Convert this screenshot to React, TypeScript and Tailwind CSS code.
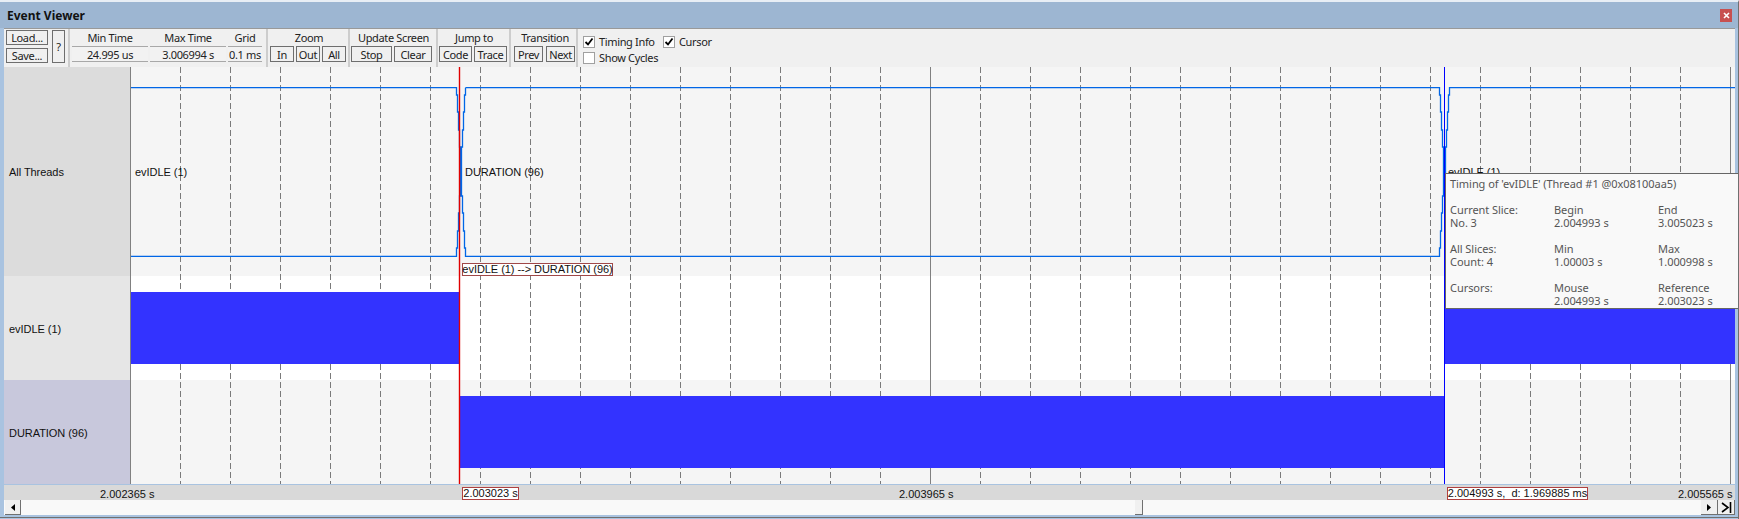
import React from "react";

const gridXs = Array.from({ length: 31 }, (_, i) => 180 + i * 50).filter((x) => x !== 930 && x !== 1730);

// y-levels where the slice trace steps one pixel inwards
const stepYs = [87.7, 95, 112, 130, 147, 196, 213, 231, 248, 256.3];
const stepDx = [0, 1, 2, 3, 4, 3, 2, 1, 0];

function edge(x: number, dir: number) {
  const pts: string[] = [];
  stepDx.forEach((dx, i) => {
    pts.push(`${x + dx * dir + 0.5},${stepYs[i]}`);
    pts.push(`${x + dx * dir + 0.5},${stepYs[i + 1]}`);
  });
  return pts;
}

function ToolButton({ label, className }: { label: string; className: string }) {
  return (
    <div className={`flex items-center justify-center border border-[#6e6e6e] bg-[#f0f0f0] text-[#222] ${className}`}>
      {label}
    </div>
  );
}

function Section({ title, className, children }: { title: string; className: string; children: React.ReactNode }) {
  return (
    <div className={`flex h-full shrink-0 flex-col border-r-2 border-r-[#cdcdcd] ${className}`}>
      <div className="flex h-[17px] items-center justify-center text-[#222]">{title}</div>
      <div className="flex h-[16px] gap-[2px]">{children}</div>
    </div>
  );
}

function ValueBox({ value, className }: { value: string; className: string }) {
  return (
    <div className={`flex items-center justify-center border-y border-y-[#a8a8a8] bg-[#f2f2f2] text-[#222] ${className}`}>
      {value}
    </div>
  );
}

function CheckBox({ label, checked, className }: { label: string; checked: boolean; className: string }) {
  return (
    <div className={`flex items-center gap-[4px] ${className}`}>
      <div className="flex h-[12px] w-[12px] items-center justify-center border border-[#a0a0a0] bg-white">
        {checked && (
          <svg width="10" height="10" viewBox="0 0 10 10">
            <path d="M1.5 5 L4 7.5 L8.5 1.5" fill="none" stroke="#000" strokeWidth="1.8" />
          </svg>
        )}
      </div>
      <span className="whitespace-nowrap text-[#222]">{label}</span>
    </div>
  );
}

function TipBlock({ rows }: { rows: string[][] }) {
  return (
    <div className="flex flex-col">
      {rows.map((row, i) => (
        <div key={i} className="grid h-[13px] grid-cols-[104px_104px_1fr] items-center whitespace-nowrap">
          {row.map((cell, j) => (
            <span key={j}>{cell}</span>
          ))}
        </div>
      ))}
    </div>
  );
}

function ScrollButton({ children, className }: { children: React.ReactNode; className: string }) {
  return (
    <div className={`flex h-[15px] items-center justify-center border-r border-b border-r-[#707070] border-b-[#707070] bg-[#f0f0f0] ${className}`}>
      {children}
    </div>
  );
}

export default function App() {
  return (
    <div className="relative flex h-[519px] w-[1739px] flex-col overflow-hidden border-t-2 border-r border-t-[#e8eef5] border-r-[#707070] bg-[#a9c3e0] text-[11px] leading-[13px] [font-family:'Noto_Sans',sans-serif]">
      {/* title bar */}
      <div className="flex h-[26px] shrink-0 items-center justify-between bg-[#9db6d2] pl-[7px] pr-[6px]">
        <span className="text-[12px] font-bold text-[#111]">Event Viewer</span>
        <div className="flex h-[13px] w-[12px] items-center justify-center bg-[#c75050]">
          <svg width="7" height="7" viewBox="0 0 7 7">
            <path d="M1 1 L6 6 M6 1 L1 6" stroke="#fff" strokeWidth="1.6" />
          </svg>
        </div>
      </div>

      <div className="ml-[4px] mr-[3px] flex min-h-0 flex-1 flex-col">
        {/* toolbar */}
        <div className="flex h-[39px] shrink-0 border-t border-t-[#999] bg-[#f0f0f0] tracking-[-0.35px]">
          <div className="flex h-full w-[66px] shrink-0 gap-[4px] border-r-2 border-r-[#cdcdcd] pl-[2px] pt-[1px]">
            <div className="flex flex-col gap-[3px]">
              <ToolButton label="Load..." className="h-[15px] w-[42px]" />
              <ToolButton label="Save..." className="h-[15px] w-[42px]" />
            </div>
            <ToolButton label="?" className="h-[33px] w-[13px]" />
          </div>
          <div className="flex h-full w-[198px] shrink-0 gap-[2px] border-r-2 border-r-[#cdcdcd] pl-[2px]">
            <div className="flex flex-col">
              <div className="flex h-[17px] items-center justify-center text-[#222]">Min Time</div>
              <ValueBox value="24.995 us" className="h-[16px] w-[76px]" />
            </div>
            <div className="flex flex-col">
              <div className="flex h-[17px] items-center justify-center text-[#222]">Max Time</div>
              <ValueBox value="3.006994 s" className="h-[16px] w-[76px]" />
            </div>
            <div className="flex flex-col">
              <div className="flex h-[17px] items-center justify-center text-[#222]">Grid</div>
              <ValueBox value="0.1 ms" className="h-[16px] w-[34px]" />
            </div>
          </div>
          <Section title="Zoom" className="w-[82px] pl-[2px]">
            <ToolButton label="In" className="w-[24px]" />
            <ToolButton label="Out" className="w-[24px]" />
            <ToolButton label="All" className="w-[24px]" />
          </Section>
          <Section title="Update Screen" className="w-[88px] pl-[1px]">
            <ToolButton label="Stop" className="w-[41px]" />
            <ToolButton label="Clear" className="w-[38px]" />
          </Section>
          <Section title="Jump to" className="w-[73px] pl-[1px]">
            <ToolButton label="Code" className="w-[33px]" />
            <ToolButton label="Trace" className="w-[33px]" />
          </Section>
          <Section title="Transition" className="w-[67px] pl-[3px]">
            <div className="flex gap-[3px]">
              <ToolButton label="Prev" className="w-[29px]" />
              <ToolButton label="Next" className="w-[29px]" />
            </div>
          </Section>
          <div className="flex flex-col gap-[3px] pl-[5px] pt-[6px]">
            <div className="flex">
              <CheckBox label="Timing Info" checked className="w-[80px]" />
              <CheckBox label="Cursor" checked className="w-[60px]" />
            </div>
            <CheckBox label="Show Cycles" checked={false} className="w-[90px]" />
          </div>
        </div>

        {/* chart rows */}
        <div className="relative flex h-[417px] shrink-0 flex-col text-[11px] tracking-[-0.05px] text-[#111] [font-family:'Liberation_Sans',sans-serif]">
          <div className="flex h-[209px]">
            <div className="flex w-[126px] items-center bg-[#dcdcdc] pl-[5px] pt-[1px]">All Threads</div>
            <div className="flex-1 bg-[#f5f5f5]" />
          </div>
          <div className="flex h-[104px]">
            <div className="flex w-[126px] items-center bg-[#e6e6e6] pl-[5px] pt-[2px]">evIDLE (1)</div>
            <div className="flex-1 bg-white" />
          </div>
          <div className="flex h-[104px]">
            <div className="flex w-[126px] items-center bg-[#c8c8dc] pl-[5px] pt-[3px]">DURATION (96)</div>
            <div className="flex-1 bg-[#f5f5f5]" />
          </div>

          <svg className="absolute left-[126px] top-0" width="1605" height="417" viewBox="130 67 1605 417">
            {gridXs.map((x) => (
              <line key={x} x1={x + 0.5} x2={x + 0.5} y1="67" y2="484" stroke="#7a7a7a" strokeDasharray="6 3" />
            ))}
            <line x1="130.5" x2="130.5" y1="67" y2="484" stroke="#808080" />
            <line x1="930.5" x2="930.5" y1="67" y2="484" stroke="#808080" />
            <line x1="1730.5" x2="1730.5" y1="67" y2="484" stroke="#808080" />
            <rect x="131" y="292" width="329" height="72" fill="#3333ff" />
            <rect x="1444" y="292" width="291" height="72" fill="#3333ff" />
            <rect x="459" y="396" width="985" height="72" fill="#3333ff" />
            <polyline points={["131,87.7", ...edge(456, 1), "131,256.3"].join(" ")} fill="none" stroke="#0066e6" strokeWidth="1.3" />
            <polyline
              points={[...edge(465, -1), ...edge(1439, 1).reverse(), "465.5,87.7"].join(" ")}
              fill="none"
              stroke="#0066e6"
              strokeWidth="1.3"
            />
            <polyline points={["1735,87.7", ...edge(1449, -1), "1735,256.3"].join(" ")} fill="none" stroke="#0066e6" strokeWidth="1.3" />
            <line x1="459.5" x2="459.5" y1="67" y2="484" stroke="#e00000" strokeWidth="1.4" />
            <line x1="1444.5" x2="1444.5" y1="67" y2="484" stroke="#0000ff" />
          </svg>

          <span className="absolute left-[131px] top-[99px] whitespace-nowrap">evIDLE (1)</span>
          <span className="absolute left-[461px] top-[99px] whitespace-nowrap">DURATION (96)</span>
          <span className="absolute left-[1444px] top-[99px] whitespace-nowrap">evIDLE (1)</span>
          <div className="absolute left-[458px] top-[196px] flex h-[13px] w-[151px] items-center justify-center whitespace-nowrap border border-[#a04848] bg-white">
            evIDLE (1) --&gt; DURATION (96)
          </div>
        </div>

        {/* time axis */}
        <div className="relative mt-[1px] h-[15px] shrink-0 bg-[#d9d9d9] text-[11px] text-[#111] [font-family:'Liberation_Sans',sans-serif]">
          <span className="absolute left-[96px] top-[3px] whitespace-nowrap">2.002365 s</span>
          <div className="absolute left-[458px] top-[2px] flex h-[13px] w-[57px] items-center justify-center whitespace-nowrap border border-[#b04040] bg-white">
            2.003023 s
          </div>
          <span className="absolute left-[895px] top-[3px] whitespace-nowrap">2.003965 s</span>
          <div className="absolute left-[1443px] top-[2px] flex h-[13px] w-[141px] items-center justify-center whitespace-nowrap border border-[#b04040] bg-white">
            2.004993 s,&nbsp; d: 1.969885 ms
          </div>
          <span className="absolute left-[1674px] top-[3px] whitespace-nowrap">2.005565 s</span>
        </div>

        {/* scrollbar */}
        <div className="flex h-[15px] shrink-0 bg-[#f9f9f9]">
          <ScrollButton className="ml-[1px] w-[16px]">
            <svg width="6" height="7" viewBox="0 0 6 7">
              <path d="M5 0 L1 3.5 L5 7 Z" fill="#000" />
            </svg>
          </ScrollButton>
          <div className="flex-1 pl-[1114px]">
            <div className="h-[15px] w-[8px] border-r border-b border-r-[#707070] border-b-[#707070] bg-[#f0f0f0]" />
          </div>
          <ScrollButton className="w-[17px]">
            <svg width="6" height="7" viewBox="0 0 6 7">
              <path d="M1 0 L5 3.5 L1 7 Z" fill="#000" />
            </svg>
          </ScrollButton>
          <ScrollButton className="w-[17px]">
            <svg width="13" height="13" viewBox="0 0 13 13">
              <path d="M2 2 L8 6.5 L2 11 M10.5 1 V12" fill="none" stroke="#000" strokeWidth="1.6" />
            </svg>
          </ScrollButton>
        </div>
        <div className="mt-[2px] h-[1px] -mx-[4px] bg-[#707070]" />
      </div>

      {/* timing tooltip */}
      <div className="absolute left-[1445px] top-[171px] flex h-[136px] w-[294px] flex-col gap-[13px] border-y border-l border-[#666] bg-[#f9f9f9] pl-[4px] pt-[3px] tracking-[-0.05px] text-[#555]">
        <div className="h-[13px] whitespace-nowrap">Timing of 'evIDLE' (Thread #1 @0x08100aa5)</div>
        <TipBlock rows={[["Current Slice:", "Begin", "End"], ["No. 3", "2.004993 s", "3.005023 s"]]} />
        <TipBlock rows={[["All Slices:", "Min", "Max"], ["Count: 4", "1.00003 s", "1.000998 s"]]} />
        <TipBlock rows={[["Cursors:", "Mouse", "Reference"], ["", "2.004993 s", "2.003023 s"]]} />
      </div>
    </div>
  );
}
